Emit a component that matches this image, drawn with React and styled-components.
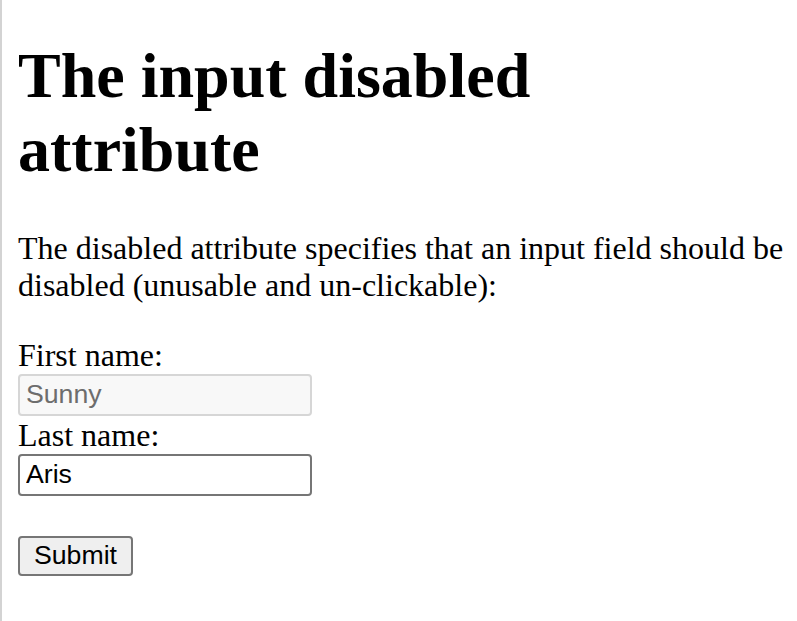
import React from 'react';
import styled, { createGlobalStyle } from 'styled-components';

const GlobalStyle = createGlobalStyle`
  html, body {
    margin: 0;
    padding: 0;
    background: #fff;
  }
  body {
    font-family: "Liberation Serif", "Times New Roman", serif;
    color: #000;
  }
`;

const Page = styled.div`
  display: flow-root;
  min-height: 100vh;
  box-sizing: border-box;
  border-left: 2px solid #d3d3d3;
  padding: 0 12px 0 16px;
`;

const Title = styled.h1`
  font-size: 64px;
  font-weight: bold;
  line-height: normal;
  margin: 39px 0 42.88px;
`;

const Text = styled.p`
  font-size: 32px;
  line-height: normal;
  margin: 32px 0;
`;

const Form = styled.form`
  font-size: 32px;
  line-height: normal;
`;

const Label = styled.label`
  display: block;
  line-height: 38px;
`;

const TextInput = styled.input`
  display: block;
  box-sizing: border-box;
  width: 294px;
  height: 42px;
  margin: 0;
  padding: 0 6px;
  font-family: "Liberation Sans", Arial, sans-serif;
  font-size: 26.67px;
  color: #000;
  background: #fff;
  border: 2px solid #767676;
  border-radius: 4px;
  outline: none;

  &:disabled {
    color: #6d6d6d;
    background: #f8f8f8;
    border-color: #d6d6d6;
  }
`;

const SubmitButton = styled.button`
  display: block;
  box-sizing: border-box;
  height: 40px;
  margin-top: 40px;
  padding: 0 14px;
  font-family: "Liberation Sans", Arial, sans-serif;
  font-size: 26.67px;
  color: #000;
  background: #efefef;
  border: 2px solid #767676;
  border-radius: 4px;
`;

export default function App() {
  return (
    <>
      <GlobalStyle />
      <Page>
        <Title>The input disabled attribute</Title>
        <Text>
          The disabled attribute specifies that an input field should be
          disabled (unusable and un-clickable):
        </Text>
        <Form onSubmit={(e) => e.preventDefault()}>
          <Label htmlFor="fname">First name:</Label>
          <TextInput type="text" id="fname" name="fname" value="Sunny" disabled readOnly />
          <Label htmlFor="lname">Last name:</Label>
          <TextInput type="text" id="lname" name="lname" defaultValue="Aris" />
          <SubmitButton type="submit">Submit</SubmitButton>
        </Form>
      </Page>
    </>
  );
}
